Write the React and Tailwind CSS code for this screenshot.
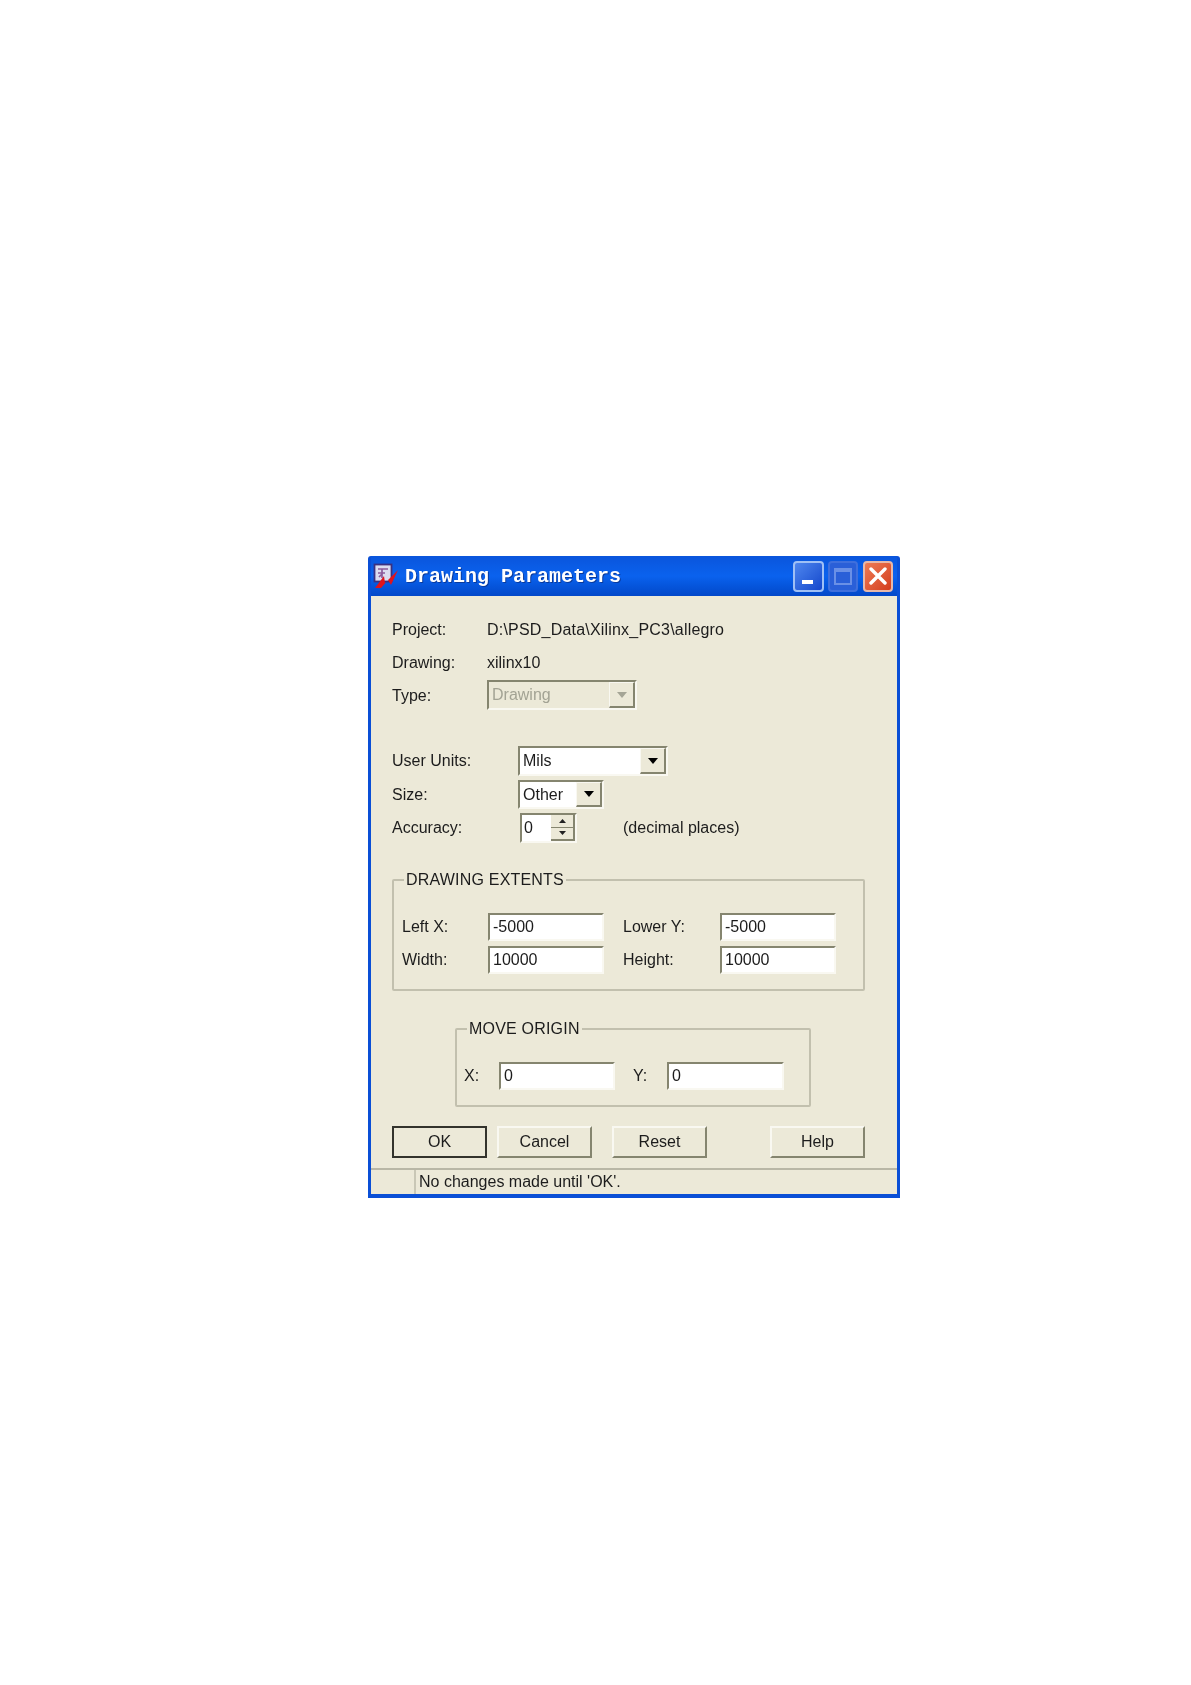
import React from 'react';

const Label = ({ className = '', children }) => (
  <span className={`text-[16px] leading-none text-[#1c1c1c] ${className}`}>{children}</span>
);

const DropArrow = ({ disabled }) => (
  <div className="flex h-full w-[26px] items-center justify-center border-t border-l border-t-[#f9f8f1] border-l-[#f9f8f1] border-r-2 border-b-2 border-r-[#85856f] border-b-[#85856f] bg-[#ece9d8]">
    <svg width="10" height="6" viewBox="0 0 10 6">
      <path d="M0 0h10L5 6z" fill={disabled ? '#a5a596' : '#000'} />
    </svg>
  </div>
);

const Combo = ({ text, className = '', disabled }) => (
  <div
    className={`flex items-stretch border-t-2 border-l-2 border-t-[#85856f] border-l-[#85856f] border-r-2 border-b-2 border-r-[#f9f8f1] border-b-[#f9f8f1] ${disabled ? 'bg-[#ece9d8]' : 'bg-white'} ${className}`}
  >
    <span className={`flex-1 pl-[3px] text-[16px] leading-[25px] ${disabled ? 'text-[#a3a394]' : 'text-[#1c1c1c]'}`}>{text}</span>
    <DropArrow disabled={disabled} />
  </div>
);

const Field = ({ value, className = '' }) => (
  <div
    className={`border-t-2 border-l-2 border-t-[#85856f] border-l-[#85856f] border-r-2 border-b-2 border-r-[#f9f8f1] border-b-[#f9f8f1] bg-white pl-[3px] text-[16px] leading-[24px] text-[#1c1c1c] ${className}`}
  >
    {value}
  </div>
);

const Btn = ({ children, active, className = '' }) => (
  <div
    className={`flex h-[32px] w-[95px] items-center justify-center text-[16px] text-[#1c1c1c] ${active ? 'border-2 border-[#33332c]' : 'border-t-2 border-l-2 border-r-2 border-b-2 border-t-[#f9f8f1] border-l-[#f9f8f1] border-r-[#85856f] border-b-[#85856f]'} ${className}`}
  >
    {children}
  </div>
);

const Group = ({ title, titleLeft, className = '', children }) => (
  <div className={`relative rounded-[2px] border-2 border-[#c2c0ae] ${className}`}>
    <span className={`absolute top-[-11px] bg-[#ece9d8] px-[2px] text-[16px] leading-[20px] tracking-[0.2px] text-[#1c1c1c] ${titleLeft}`}>{title}</span>
    {children}
  </div>
);

export default function App() {
  return (
    <div className="min-h-[1685px] bg-white pt-[556px] pl-[368px] font-['Liberation_Sans',Arial,sans-serif]">
      <div className="h-[642px] w-[532px] overflow-hidden rounded-t-[3px] bg-[#0a4fd6] px-[3px] pb-[4px] blur-[0.5px]">
        {/* title bar */}
        <div className="flex h-[40px] items-center bg-gradient-to-b from-[#0a55dc] via-[#0a62ee] to-[#0348c9] pr-[4px]">
          <svg width="27" height="26" viewBox="0 0 27 26" className="ml-[2px] shrink-0">
            <rect x="1.5" y="1.5" width="17" height="17" fill="#dcdcf0" stroke="#3a3080" strokeWidth="1.8" />
            <path d="M5 6h10M5 10h7M9 6v9M6 14l3-3" stroke="#8a5a9a" strokeWidth="1.7" fill="none" />
            <path d="M2 25l9-12 1 7L25 7l-7 15-3-5-7 8z" fill="#e0141c" />
          </svg>
          <span className="ml-[5px] mt-[2px] font-['Liberation_Mono',monospace] text-[20px] leading-none font-bold text-white [text-shadow:1px_1px_0_#0a3a9c]">
            Drawing Parameters
          </span>
          <div className="ml-auto flex items-center">
            <div className="relative h-[31px] w-[31px] rounded-[4px] border-2 border-[#9fc0f5] bg-gradient-to-br from-[#4f86ee] to-[#1546cc]">
              <div className="absolute bottom-[6px] left-[7px] h-[4px] w-[11px] bg-white" />
            </div>
            <div className="ml-[4px] flex h-[31px] w-[30px] items-center justify-center rounded-[4px] border-2 border-[#3f6fdc] bg-[#2a5fd8]">
              <div className="h-[17px] w-[18px] border-2 border-t-[4px] border-[#6a90e6]" />
            </div>
            <div className="ml-[5px] flex h-[31px] w-[30px] items-center justify-center rounded-[4px] border-2 border-[#e8b8a8] bg-gradient-to-br from-[#ee7a54] to-[#d33c1c]">
              <svg width="18" height="18" viewBox="0 0 18 18">
                <path d="M2 2l14 14M16 2L2 16" stroke="#fff" strokeWidth="3.4" strokeLinecap="round" />
              </svg>
            </div>
          </div>
        </div>

        {/* body */}
        <div className="flex h-[598px] flex-col bg-[#ece9d8]">
          <div className="flex-1 pl-[21px] pt-[19px]">
            <div className="flex h-[30px] items-center">
              <Label className="w-[95px]">Project:</Label>
              <Label className="tracking-[0.2px]">D:\PSD_Data\Xilinx_PC3\allegro</Label>
            </div>
            <div className="mt-[3px] flex h-[30px] items-center">
              <Label className="w-[95px]">Drawing:</Label>
              <Label>xilinx10</Label>
            </div>
            <div className="mt-[2px] flex h-[30px] items-center">
              <Label className="mt-[1px] w-[95px]">Type:</Label>
              <Combo text="Drawing" disabled className="h-[30px] w-[150px]" />
            </div>

            <div className="mt-[36px] flex h-[30px] items-center">
              <Label className="w-[126px]">User Units:</Label>
              <Combo text="Mils" className="h-[30px] w-[150px]" />
            </div>
            <div className="mt-[4px] flex h-[29px] items-center">
              <Label className="w-[126px]">Size:</Label>
              <Combo text="Other" className="h-[29px] w-[86px]" />
            </div>
            <div className="mt-[4px] flex h-[30px] items-center">
              <Label className="w-[128px]">Accuracy:</Label>
              <div className="flex h-[30px] w-[57px] border-t-2 border-l-2 border-t-[#85856f] border-l-[#85856f] border-r-2 border-b-2 border-r-[#f9f8f1] border-b-[#f9f8f1] bg-white">
                <span className="flex-1 pl-[2px] text-[16px] leading-[25px] text-[#1c1c1c]">0</span>
                <div className="flex w-[24px] flex-col bg-[#ece9d8]">
                  <div className="flex flex-1 items-center justify-center border-r-2 border-b border-[#85856f]">
                    <svg width="7" height="4" viewBox="0 0 7 4"><path d="M3.5 0L7 4H0z" fill="#222" /></svg>
                  </div>
                  <div className="flex flex-1 items-center justify-center border-r-2 border-b-2 border-[#85856f]">
                    <svg width="7" height="4" viewBox="0 0 7 4"><path d="M0 0h7L3.5 4z" fill="#222" /></svg>
                  </div>
                </div>
              </div>
              <Label className="ml-[46px]">(decimal places)</Label>
            </div>

            <Group title="DRAWING EXTENTS" titleLeft="left-[10px]" className="mt-[36px] h-[112px] w-[473px]">
              <div className="flex flex-col gap-[5px] pt-[32px] pl-[8px]">
                <div className="flex h-[28px] items-center">
                  <Label className="w-[86px]">Left X:</Label>
                  <Field value="-5000" className="h-[28px] w-[116px]" />
                  <Label className="ml-[19px] w-[97px]">Lower Y:</Label>
                  <Field value="-5000" className="h-[28px] w-[116px]" />
                </div>
                <div className="flex h-[28px] items-center">
                  <Label className="w-[86px]">Width:</Label>
                  <Field value="10000" className="h-[28px] w-[116px]" />
                  <Label className="ml-[19px] w-[97px]">Height:</Label>
                  <Field value="10000" className="h-[28px] w-[116px]" />
                </div>
              </div>
            </Group>

            <Group title="MOVE ORIGIN" titleLeft="left-[10px]" className="mt-[37px] ml-[63px] h-[79px] w-[356px]">
              <div className="mt-[32px] flex h-[28px] items-center pl-[7px]">
                <Label className="w-[35px]">X:</Label>
                <Field value="0" className="h-[28px] w-[116px]" />
                <Label className="ml-[18px] w-[34px]">Y:</Label>
                <Field value="0" className="h-[28px] w-[117px]" />
              </div>
            </Group>

            <div className="mt-[19px] flex">
              <Btn active>OK</Btn>
              <Btn className="ml-[10px]">Cancel</Btn>
              <Btn className="ml-[20px]">Reset</Btn>
              <Btn className="ml-[63px]">Help</Btn>
            </div>
          </div>

          {/* status bar */}
          <div className="flex h-[26px] border-t-2 border-[#b9b7a6]">
            <div className="w-[45px] border-r-2 border-[#c9c7b6]" />
            <span className="pl-[3px] text-[16px] leading-[24px] text-[#1c1c1c]">No changes made until 'OK'.</span>
          </div>
        </div>
      </div>
    </div>
  );
}
